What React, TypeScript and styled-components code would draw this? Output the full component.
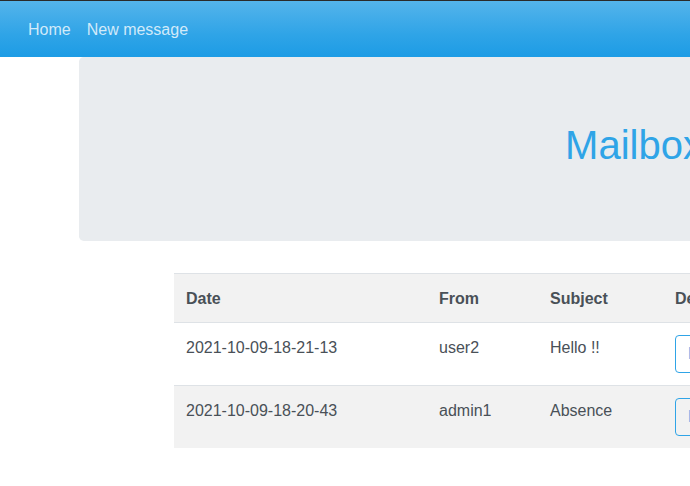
import React from "react";
import styled, { createGlobalStyle } from "styled-components";

const Global = createGlobalStyle`
  html, body { margin: 0; padding: 0; background: #fff; overflow: hidden; }
  body {
    font-family: "Liberation Sans", Arial, sans-serif;
    font-size: 16px;
    line-height: 1.5;
    color: #495057;
  }
  * { box-sizing: border-box; }
`;

const Page = styled.div`
  width: 1400px;
`;

const Navbar = styled.nav`
  display: flex;
  align-items: center;
  height: 57px;
  padding: 8px 20px;
  border-top: 1px solid #2a2a2a;
  background-image: linear-gradient(#54b4eb, #2fa4e7 60%, #1d9ce5);
`;

const NavLink = styled.a`
  padding: 9px 8px 7px;
  color: rgba(255, 255, 255, 0.78);
  text-decoration: none;
  font-size: 16px;
  line-height: 24px;
`;

const Main = styled.main`
  padding-left: 79px;
  display: flex;
  flex-direction: column;
`;

const Jumbotron = styled.section`
  width: 1110px;
  padding: 64px 32px;
  background: #e9ecef;
  border-radius: 4.8px;
  text-align: center;
`;

const Title = styled.h1`
  margin: 0 0 8px;
  padding-top: 1px;
  font-size: 40px;
  line-height: 47px;
  font-weight: 400;
  color: #2fa4e7;
`;

const Table = styled.table`
  margin: 32px 0 0 95px;
  border-collapse: collapse;
  width: 700px;
`;

const Row = styled.tr<{ $shaded?: boolean }>`
  background: ${(p) => (p.$shaded ? "#f2f2f2" : "#fff")};
`;

const Th = styled.th<{ $w: number }>`
  width: ${(p) => p.$w}px;
  padding: 13px 12px 11px;
  border-top: 1px solid #dee2e6;
  text-align: left;
  vertical-align: top;
  font-weight: 700;
  line-height: 24px;
  color: #495057;
`;

const Td = styled.td`
  padding: 12px;
  border-top: 1px solid #dee2e6;
  vertical-align: top;
  line-height: 24px;
`;

const CellText = styled.div`
  padding-top: 1px;
  margin-bottom: -1px;
`;

const OutlineButton = styled.button`
  height: 38px;
  padding: 6px 12px;
  font-family: inherit;
  font-size: 16px;
  line-height: 24px;
  color: #2fa4e7;
  background: transparent;
  border: 1px solid #2fa4e7;
  border-radius: 4px;
`;

const messages = [
  { date: "2021-10-09-18-21-13", from: "user2", subject: "Hello !!" },
  { date: "2021-10-09-18-20-43", from: "admin1", subject: "Absence" },
];

export default function App() {
  return (
    <Page>
      <Global />
      <Navbar>
        <NavLink href="#">Home</NavLink>
        <NavLink href="#">New message</NavLink>
      </Navbar>
      <Main>
        <Jumbotron>
          <Title>Mailbox</Title>
        </Jumbotron>
        <Table>
          <tbody>
            <Row $shaded>
              <Th $w={253}>Date</Th>
              <Th $w={111}>From</Th>
              <Th $w={125}>Subject</Th>
              <Th $w={211}>Details</Th>
            </Row>
            {messages.map((m, i) => (
              <Row key={m.date} $shaded={i % 2 === 1}>
                <Td><CellText>{m.date}</CellText></Td>
                <Td><CellText>{m.from}</CellText></Td>
                <Td><CellText>{m.subject}</CellText></Td>
                <Td>
                  <OutlineButton>Read</OutlineButton>
                </Td>
              </Row>
            ))}
          </tbody>
        </Table>
      </Main>
    </Page>
  );
}
